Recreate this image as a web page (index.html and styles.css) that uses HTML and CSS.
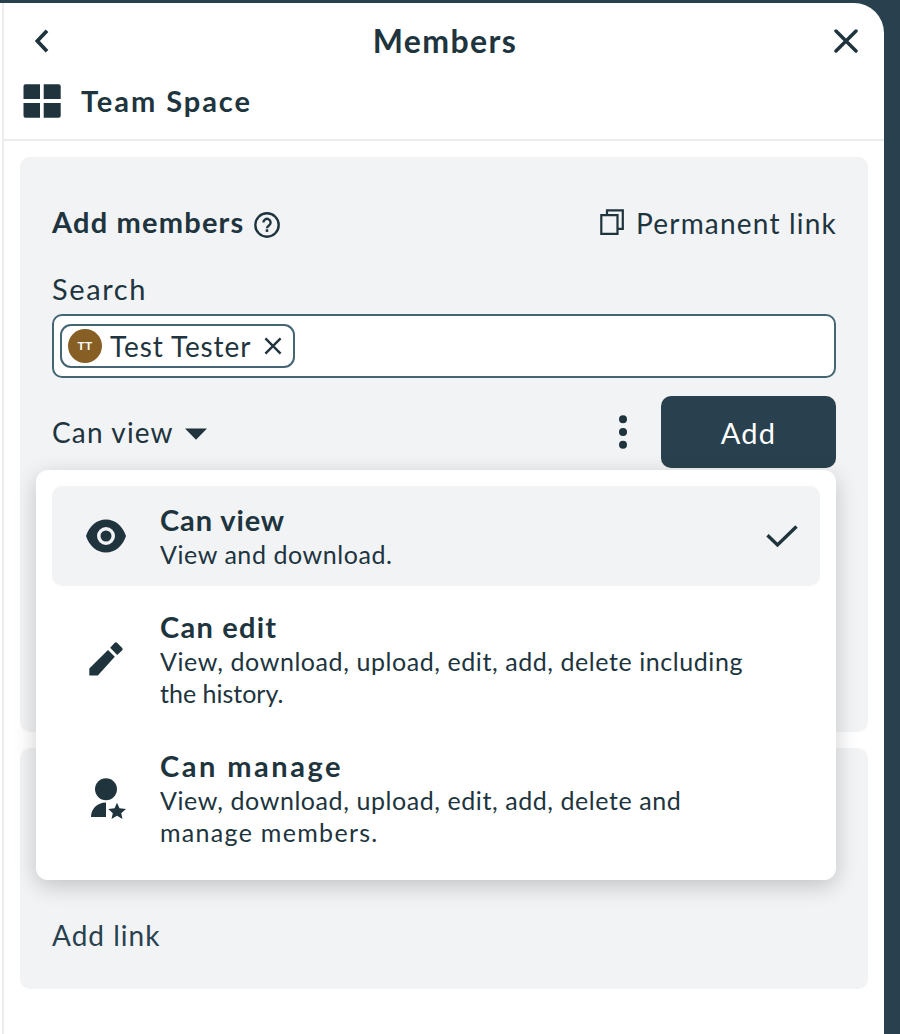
FILE: index.html
```html
<!DOCTYPE html>
<html lang="en">
<head>
<meta charset="utf-8">
<title>Members</title>
<link rel="stylesheet" href="styles.css">
</head>
<body>
<aside class="sidebar">
  <header class="head">
    <div class="title-row">
      <svg class="icon-back" width="14" height="24" viewBox="0 0 14 24"><path d="M12 1.7 2.300 12 12 22.3" fill="none" stroke="currentColor" stroke-width="3.800"/></svg>
      <h1 class="title">Members</h1>
      <svg class="icon-close" width="24" height="24" viewBox="0 0 24 24"><path d="M2 2l20 20M22 2 2 22" fill="none" stroke="currentColor" stroke-width="3.500" stroke-linecap="round"/></svg>
    </div>
    <div class="space-row">
      <svg width="38" height="34" viewBox="0 0 38 34" fill="currentColor"><path d="M2.500.300H17v14.700H.500V2.300q0-2 2-2zM20.700.300h15q2 0 2 2V15h-17zM.500 19H17v14.700H2.500q-2 0-2-2zM20.700 19h17v12.700q0 2-2 2h-15z"/></svg>
      <h2 class="space-name">Team Space</h2>
    </div>
  </header>
  <section class="card members">
    <div class="section-row">
      <div class="section-title">
        <h3 class="heading">Add members</h3>
        <svg class="icon-help" width="26" height="26" viewBox="0 0 26 26" fill="none" stroke="currentColor"><circle cx="13" cy="13" r="11.700" stroke-width="2.400"/><path d="M9.400 10.500a3.600 3.600 0 1 1 5.800 2.800c-1.300 1-2.200 1.500-2.200 3" stroke-width="2.400"/><path d="M13 17.300v2.600" stroke-width="2.600"/></svg>
      </div>
      <a class="perma"><svg class="icon-copy" width="24" height="26" viewBox="0 0 24 26" fill="none" stroke="currentColor" stroke-width="2.200"><path d="M7 5V1.300h15.800v18.600H18.500M1.300 6.100h16.200v18.700H1.300z"/></svg><span class="perma-text">Permanent link</span></a>
    </div>
    <label class="search-label">Search</label>
    <div class="search-box">
      <div class="chip">
        <span class="avatar">TT</span>
        <span class="chip-name">Test Tester</span>
        <svg width="18" height="18" viewBox="0 0 18 18"><path d="M1.400 1.400l15.200 15.200M16.600 1.400 1.400 16.600" fill="none" stroke="currentColor" stroke-width="2.400"/></svg>
      </div>
    </div>
    <div class="action-row">
      <div class="role-select"><span class="role-text">Can view</span><svg class="icon-caret" width="22" height="12" viewBox="0 0 22 12"><path d="M0 .5h22L11 11.700z" fill="currentColor"/></svg></div>
      <svg class="icon-more" width="8" height="34" viewBox="0 0 8 34" fill="currentColor"><circle cx="4" cy="4.200" r="4"/><circle cx="4" cy="17" r="4"/><circle cx="4" cy="29.800" r="4"/></svg>
      <button class="add-button">Add</button>
    </div>
    <div class="menu">
      <div class="option selected">
        <div class="option-icon"><svg width="40" height="34" viewBox="0 0 40 34" fill="currentColor"><path fill-rule="evenodd" d="M20 .5C10.800.500 3.200 7 0 17c3.200 10 10.800 16.500 20 16.500S36.800 27 40 17C36.800 7 29.200.500 20 .5zM20 26a9 9 0 1 1 0-18 9 9 0 0 1 0 18z"/><circle cx="20" cy="17" r="5.500"/></svg></div>
        <div class="option-body"><div class="option-name">Can view</div><div class="option-text">View and download.</div></div>
        <svg class="icon-check" width="32" height="22" viewBox="0 0 32 22"><path d="M1.500 10.200l10 9.700L30.500 1.500" fill="none" stroke="currentColor" stroke-width="3.400"/></svg>
      </div>
      <div class="option">
        <div class="option-icon"><svg width="34" height="34" viewBox="0 0 34 34" fill="currentColor"><path d="M.3 26.500 19 8l6.800 6.800L8.800 33.500H.3zM21.200 5.800 25.500 1q1.400-1.400 2.800 0l4.700 4.700q1.400 1.400 0 2.800l-4.800 4.500z"/></svg></div>
        <div class="option-body"><div class="option-name name-edit">Can edit</div><div class="option-text">View, download, upload, edit, add, delete including<br><span class="tight">the history.</span></div></div>
      </div>
      <div class="option">
        <div class="option-icon manager"><svg width="35" height="41" viewBox="0 0 35 41" fill="currentColor"><circle cx="15" cy="11.200" r="11"/><path d="M15 24.500V39H0C0 31 6 24.500 15 24.500z"/><path d="M26 24.800l2.500 5.500 6.500.7-4.800 4.200 1.300 5.800-5.500-3.200-5.500 3.200 1.300-5.800L17.300 31l6.300-.7z"/></svg></div>
        <div class="option-body"><div class="option-name name-manage">Can manage</div><div class="option-text">View, download, upload, edit, add, delete and<br><span class="wide">manage members.</span></div></div>
      </div>
    </div>
  </section>
  <section class="card links"><a class="add-link">Add link</a></section>
</aside>
</body>
</html>
```
FILE: styles.css
```css
* { box-sizing: border-box; }
body { margin: 0; background: #29414e; color: #20343e; font-family: Lato, sans-serif; font-size: 28px; line-height: 36px; overflow: hidden; }
h1, h2, h3 { margin: 0; font-weight: 700; }
svg { display: block; flex: none; }
.sidebar { width: 884px; height: 1031px; margin-top: 3px; background: #fff; border-top-right-radius: 30px; position: relative; }
.sidebar::before { content: ""; position: absolute; left: 2px; top: 0; bottom: 0; width: 2px; background: #ececec; }
.head { height: 138px; margin-left: 4px; border-bottom: 2px solid #ececec; padding: 18px 26px 0 20px; }
.title-row { display: grid; grid-template-columns: 36px 1fr 36px; align-items: center; height: 40px; }
.icon-back { margin-left: 11px; }
.icon-close { margin-left: 12px; }
.title { font-size: 32px; line-height: 40px; text-align: center; letter-spacing: 1.4px; padding-left: 8px; }
.space-row { display: flex; align-items: center; gap: 20px; height: 40px; margin-top: 20px; margin-left: -1px; }
.space-name { font-size: 29px; letter-spacing: 1.95px; margin-top: -1px; }
.card { margin: 16px 16px 0 20px; background: #f1f3f5; border-radius: 10px; padding: 0 32px; }
.members { height: 575px; padding-top: 47px; position: relative; }
.section-row { display: flex; justify-content: space-between; align-items: center; height: 38px; }
.section-title, .perma, .role-select { display: flex; align-items: center; }
.heading { font-size: 29px; letter-spacing: 1.2px; margin-top: -3px; }
.icon-help { margin: 4px 0 0 9px; }
.perma { gap: 12px; letter-spacing: 1.2px; margin-right: -1px; }
.icon-copy { margin-top: -2px; }
.search-label { display: block; margin-top: 29px; height: 43px; line-height: 36px; font-size: 29px; letter-spacing: 1.6px; }
.search-box { height: 64px; border: 2px solid #456474; border-radius: 10px; background: #fff; padding: 8px 6px; }
.chip { width: 235px; height: 44px; border: 2px solid #456474; border-radius: 11px; padding: 0 11px 0 6px; display: flex; align-items: center; }
.avatar { width: 34px; height: 34px; flex: none; border-radius: 50%; background: #875f24; color: #fff; font-size: 12px; font-weight: 700; line-height: 33px; text-align: center; margin-right: 8px; letter-spacing: .3px; }
.chip-name { flex: 1; letter-spacing: 0.9px; white-space: nowrap; }
.action-row { display: flex; align-items: center; height: 72px; margin-top: 18px; }
.role-select { gap: 11px; }
.role-text { letter-spacing: 1.15px; }
.icon-caret { margin-top: 3px; }
.icon-more { margin: 0 34px 0 auto; }
.add-button { width: 175px; height: 72px; border: 0; border-radius: 10px; background: #29414e; color: #fff; font: 29px Lato, sans-serif; letter-spacing: 1.2px; }
.menu { position: absolute; left: 16px; top: 313px; width: 800px; height: 410px; padding: 16px; background: #fff; border-radius: 12px; box-shadow: 0 6px 22px rgba(0,0,0,.2); z-index: 1; }
.option { height: 139px; padding: 20px 22px 0 34px; display: flex; }
.option.selected { height: 100px; background: #f1f3f5; border-radius: 10px; padding-top: 16px; margin-bottom: 3px; }
.option-icon { width: 40px; height: 68px; margin-right: 34px; display: flex; align-items: center; justify-content: center; }
.option:not(.selected) .option-icon { height: 100px; }
.manager { padding-left: 4px; }
.option-body { flex: 1; white-space: nowrap; }
.option-name { font-size: 29px; font-weight: 700; line-height: 36px; letter-spacing: 0.9px; }
.name-edit { letter-spacing: 1.25px; }
.name-manage { letter-spacing: 2.5px; }
.option-text { font-size: 25px; line-height: 32px; letter-spacing: 0.57px; }
.tight { letter-spacing: 0; }
.wide { letter-spacing: 1.3px; }
.icon-check { align-self: center; margin-top: -16px; }
.links { height: 241px; padding-top: 169px; }
.add-link { color: #29414e; letter-spacing: 1px; }
```
